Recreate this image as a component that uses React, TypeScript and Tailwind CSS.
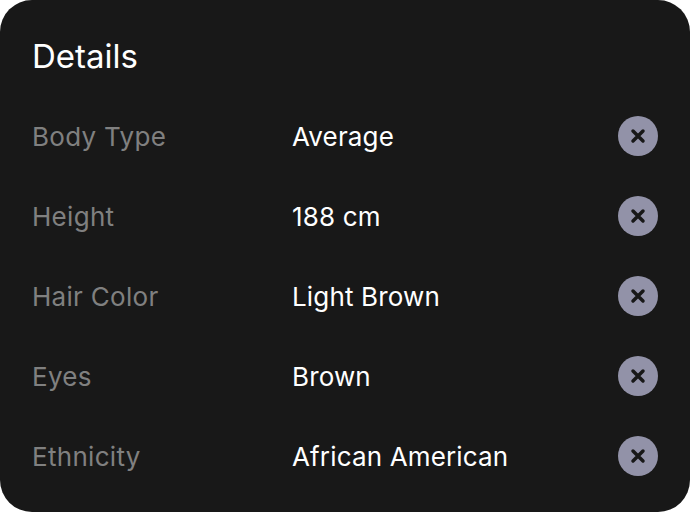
const rows = [
  ['Body Type', 'Average'],
  ['Height', '188 cm'],
  ['Hair Color', 'Light Brown'],
  ['Eyes', 'Brown'],
  ['Ethnicity', 'African American'],
];

export default function App() {
  return (
    <div className="h-[512px] w-[690px] rounded-[32px] bg-[#181818] pl-[32px] pr-[32px] pt-[36px] font-['Inter',sans-serif]">
      <h2 className="text-[33px] leading-[40px] text-white">Details</h2>
      <div className="mt-[40px] flex flex-col gap-[40px]">
        {rows.map(([label, value]) => (
          <div key={label} className="flex h-[40px] items-center text-[26px]">
            <span className="w-[260px] tracking-[0.3px] text-[#808080]">{label}</span>
            <span className="flex-1 tracking-[0.15px] text-white">{value}</span>
            <span className="flex h-[40px] w-[40px] items-center justify-center rounded-full bg-[#9292a8]">
              <svg width="16" height="16" viewBox="0 0 16 16" fill="none" stroke="#181818" strokeWidth="3.5" strokeLinecap="round">
                <path d="M3 3l10 10M13 3L3 13" />
              </svg>
            </span>
          </div>
        ))}
      </div>
    </div>
  );
}
